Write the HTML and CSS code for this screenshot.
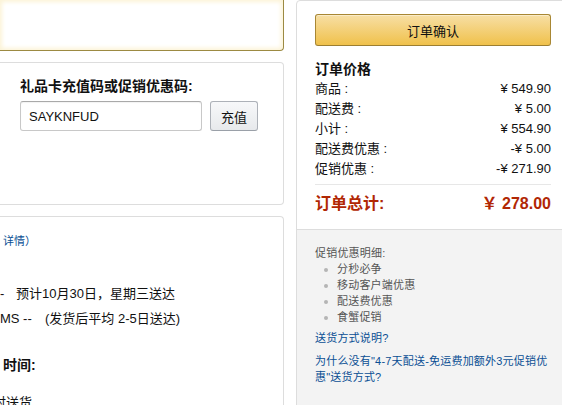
FILE: index.html
```html
<!DOCTYPE html>
<html lang="zh-CN">
<head>
<meta charset="utf-8">
<title>订单确认</title>
<link rel="stylesheet" href="styles.css">
</head>
<body>
<div class="page">
  <div class="left">
    <div class="box alert"></div>
    <div class="box gift">
      <div class="gift-title">礼品卡充值码或促销优惠码:</div>
      <div class="gift-row">
        <input class="gift-input" type="text" value="SAYKNFUD">
        <button class="btn-gray" type="button">充值</button>
      </div>
    </div>
    <div class="box ship">
      <div class="ship-link"><a href="#">详情</a>）</div>
      <p class="opt opt-first"><span class="opt-prefix p1">-</span>预计10月30日，星期三送达</p>
      <p class="opt"><span class="opt-prefix p2">MS --</span>(发货后平均 2-5日送达)</p>
      <div class="ship-title">时间:</div>
      <p class="ship-cut">时送货</p>
    </div>
  </div>
  <div class="right">
    <div class="summary">
      <button class="btn-confirm" type="button">订单确认</button>
      <div class="sum-title">订单价格</div>
      <div class="sum-row"><span>商品 :</span><span>¥ 549.90</span></div>
      <div class="sum-row"><span>配送费 :</span><span>¥ 5.00</span></div>
      <div class="sum-row"><span>小计 :</span><span>¥ 554.90</span></div>
      <div class="sum-row"><span>配送费优惠 :</span><span>-¥ 5.00</span></div>
      <div class="sum-row"><span>促销优惠 :</span><span>-¥ 271.90</span></div>
      <div class="sum-total"><span>订单总计:</span><span>￥ 278.00</span></div>
    </div>
    <div class="promo">
      <div class="promo-title">促销优惠明细:</div>
      <ul class="promo-list">
        <li>分秒必争</li>
        <li>移动客户端优惠</li>
        <li>配送费优惠</li>
        <li>食蟹促销</li>
      </ul>
      <a class="promo-link first" href="#">送货方式说明?</a>
      <a class="promo-link second" href="#">为什么没有"4-7天配送-免运费加额外3元促销优惠"送货方式?</a>
    </div>
  </div>
</div>
</body>
</html>
```

FILE: styles.css
```css
* { box-sizing: border-box; }
html, body {
  margin: 0;
  padding: 0;
  background: #fff;
  overflow: hidden;
}
body {
  font-family: "Liberation Sans", "Noto Sans CJK SC", sans-serif;
  font-size: 13px;
  color: #111;
  width: 562px;
  height: 405px;
}
a { color: #0a4f94; text-decoration: none; }

.page {
  display: flex;
  align-items: flex-start;
  width: 600px;
}

/* Left column */
.left {
  width: 284px;
  flex: none;
  display: flex;
  flex-direction: column;
  gap: 11px;
}
.box {
  background: #fff;
  border: 1px solid #ddd;
  border-left: none;
}
.alert {
  height: 51px;
  border-top: none;
  border-color: #9c8a42;
  border-radius: 0 0 4px 0;
  box-shadow: inset 0 0 4px 2px #fcf3d6;
}
.gift {
  height: 143px;
  border-radius: 0 4px 4px 0;
  padding: 14px 0 0 20px;
}
.gift-title {
  font-weight: bold;
  font-size: 14px;
  line-height: 18px;
  color: #111;
}
.gift-row {
  display: flex;
  gap: 8px;
  margin-top: 6px;
}
.gift-input {
  width: 182px;
  height: 30px;
  border: 1px solid #c8c8c8;
  border-top-color: #a9a9a9;
  border-radius: 3px;
  padding: 0 0 0 8px;
  font-family: "Liberation Sans", sans-serif;
  font-size: 13px;
  color: #111;
  box-shadow: inset 0 1px 1px rgba(0,0,0,0.05);
  outline: none;
}
.btn-gray {
  width: 48px;
  height: 30px;
  border: 1px solid #adb1b8;
  border-bottom-color: #9aa0a8;
  border-radius: 3px;
  background: linear-gradient(#f7f8fa, #e7e9ec);
  font-family: "Liberation Sans", "Noto Sans CJK SC", sans-serif;
  font-size: 13px;
  color: #111;
  padding: 0;
}
.ship {
  height: 220px;
  border-bottom: none;
  border-radius: 0 4px 0 0;
  padding-top: 16px;
}
.ship-link {
  font-size: 11px;
  line-height: 16px;
  padding-left: 3px;
  color: #0a4f94;
}
.opt {
  margin: 0;
  font-size: 13px;
  line-height: 25px;
  color: #111;
  white-space: nowrap;
}
.opt-first { margin-top: 32px; }
.opt-prefix { display: inline-block; }
.p1 { width: 16px; }
.p2 { width: 45px; }
.ship-title {
  margin-top: 24px;
  padding-left: 3px;
  font-weight: bold;
  font-size: 14px;
  line-height: 20px;
}
.ship-cut {
  margin: 18px 0 0;
  text-indent: -7px;
  font-size: 13px;
  line-height: 20px;
}

/* Right column */
.right {
  width: 274px;
  flex: none;
  margin-left: 12px;
  border: 1px solid #ddd;
  border-radius: 4px 4px 0 0;
  height: 420px;
  display: flex;
  flex-direction: column;
}
.summary {
  padding: 13px 18px 13px;
}
.btn-confirm {
  display: block;
  width: 236px;
  height: 32px;
  border: 1px solid #a88734;
  border-bottom-color: #9c7e31;
  border-radius: 3px;
  background: linear-gradient(#f7dfa5, #f0c14b);
  font-family: "Liberation Sans", "Noto Sans CJK SC", sans-serif;
  font-size: 13px;
  color: #111;
  padding: 0;
  box-shadow: inset 0 1px 0 rgba(255,255,255,0.4);
}
.sum-title {
  margin-top: 13px;
  font-weight: bold;
  font-size: 14px;
  line-height: 20px;
}
.sum-row {
  display: flex;
  justify-content: space-between;
  line-height: 20px;
  font-size: 13px;
  color: #111;
}
.sum-total {
  margin-top: 5px;
  border-top: 1px solid #e7e7e7;
  padding-top: 7px;
  display: flex;
  justify-content: space-between;
  color: #b12704;
  font-weight: bold;
  font-size: 16px;
  line-height: 24px;
}
.promo {
  flex: 1;
  background: #f3f3f3;
  border-top: 1px solid #ddd;
  padding: 15px 18px;
  font-size: 11px;
  line-height: 16px;
  letter-spacing: 0.2px;
  color: #555;
}
.promo-title { color: #555; }
.promo-list {
  list-style: none;
  margin: 0;
  padding: 0;
}
.promo-list li::before {
  content: "";
  display: inline-block;
  width: 4px;
  height: 4px;
  border-radius: 50%;
  background: #b5b5b5;
  margin: 0 9px 0 9px;
  vertical-align: middle;
}
.promo-link {
  display: block;
  color: #0a4f94;
}
.promo-link.first { margin-top: 5px; }
.promo-link.second { margin-top: 7px; }
```
